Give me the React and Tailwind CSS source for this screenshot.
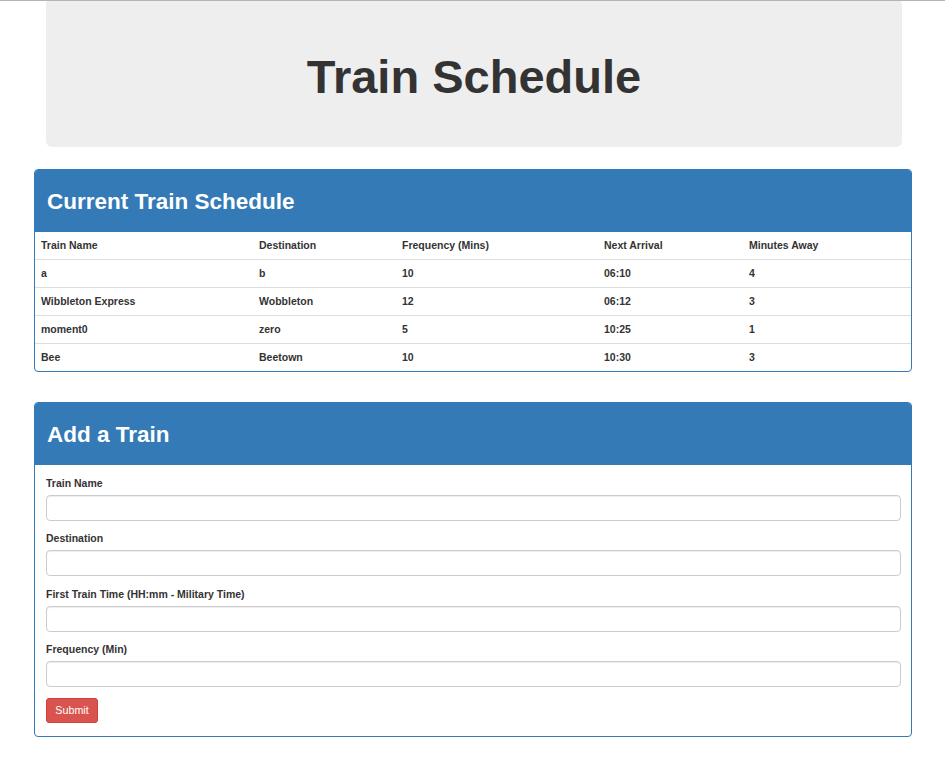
import React from "react";

const rows = [
  ["a", "b", "10", "06:10", "4"],
  ["Wibbleton Express", "Wobbleton", "12", "06:12", "3"],
  ["moment0", "zero", "5", "10:25", "1"],
  ["Bee", "Beetown", "10", "10:30", "3"],
];

const headers = ["Train Name", "Destination", "Frequency (Mins)", "Next Arrival", "Minutes Away"];
const widths = ["w-[218px]", "w-[143px]", "w-[202px]", "w-[145px]", ""];

const fields = [
  "Train Name",
  "Destination",
  "First Train Time (HH:mm - Military Time)",
  "Frequency (Min)",
];

export default function App() {
  return (
    <div className="min-h-[777px] bg-white text-[#333] font-['Liberation_Sans',Arial,sans-serif]">
      <div className="h-px bg-[#b4b4b4]" />
      <div className="pl-[34px] pr-[33px] pb-[40px]">
        <div className="ml-[12px] mr-[10px] h-[146px] rounded-b-[6px] rounded-t-[2px] bg-[#eeeeee] flex items-center justify-center">
          <h1 className="text-[47px] font-bold leading-none text-[#333] mt-[5px]">Train Schedule</h1>
        </div>

        <div className="mt-[22px] rounded-[4px] border border-[#337ab7] overflow-hidden">
          <div className="h-[62px] bg-[#337ab7] flex items-center pl-[12px]">
            <h2 className="text-[22.5px] font-bold text-white leading-none mt-[3px]">Current Train Schedule</h2>
          </div>
          <table className="w-full table-fixed border-collapse text-[10.5px] font-bold">
            <thead>
              <tr className="h-[27px]">
                {headers.map((h, i) => (
                  <th key={h} className={`${widths[i]} px-[6px] pt-[1px] text-left align-middle font-bold`}>{h}</th>
                ))}
              </tr>
            </thead>
            <tbody>
              {rows.map((r, ri) => (
                <tr key={ri} className="h-[28px] border-t border-[#dddddd]">
                  {r.map((c, ci) => (
                    <td key={ci} className="px-[6px] pt-[1px] align-middle">{c}</td>
                  ))}
                </tr>
              ))}
            </tbody>
          </table>
        </div>

        <div className="mt-[30px] rounded-[4px] border border-[#337ab7] overflow-hidden">
          <div className="h-[62px] bg-[#337ab7] flex items-center pl-[12px]">
            <h2 className="text-[22.5px] font-bold text-white leading-none mt-[3px]">Add a Train</h2>
          </div>
          <div className="pl-[11px] pr-[10px] pt-[11px] pb-[13px]">
            {fields.map((f) => (
              <div key={f} className="mb-[10.3px]">
                <label className="block text-[10.5px] font-bold leading-[14px] mb-[5px]">{f}</label>
                <input
                  type="text"
                  className="block w-full h-[26px] rounded-[4px] border border-[#cccccc] bg-white shadow-[inset_0_1px_1px_rgba(0,0,0,0.075)] outline-none"
                />
              </div>
            ))}
            <button className="h-[25px] w-[52px] rounded-[3px] border border-[#d43f3a] bg-[#d9534f] text-white text-[10.7px] leading-none">
              Submit
            </button>
          </div>
        </div>
      </div>
    </div>
  );
}
